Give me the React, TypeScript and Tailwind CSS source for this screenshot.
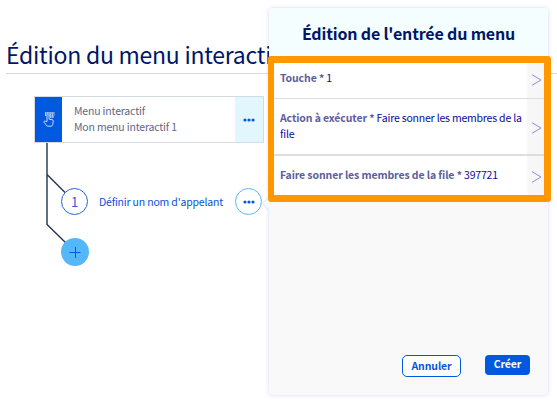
function Dots({ className }: { className: string }) {
  return (
    <svg className={className} width="12" height="4" viewBox="0 0 12 4" fill="currentColor">
      <circle cx="2" cy="2" r="1.6" />
      <circle cx="6" cy="2" r="1.6" />
      <circle cx="10" cy="2" r="1.6" />
    </svg>
  );
}

function KeypadHand() {
  return (
    <svg className="-mt-px" width="12" height="15" viewBox="0 0 12 15" fill="none" stroke="#dbe9ff" strokeWidth="0.9" strokeLinejoin="round">
      <path d="M2 1h9.5M2 3h1.6M6.4 3h5M7 5h4" strokeDasharray="1.6 .5" strokeWidth="1.5" />
      <path d="M4 9.5V3.4c0-1.2 2-1.2 2 0v3.8l3.2.5c.8.1 1.2.6 1.1 1.3l-.6 3.4-1 1.8H4.3L1 10.3c-.5-.9.6-1.6 1.3-1z" />
    </svg>
  );
}

type RowProps = { label: string; value: string; className: string; textTop: string; arrowTop: string };

function Row({ label, value, className, textTop, arrowTop }: RowProps) {
  return (
    <div className={`flex border-[#dedede] bg-white ${className}`}>
      <p className={`w-[253px] shrink-0 pl-[6px] text-[10.5px] leading-4 tracking-[-0.2px] text-[#0a0a9c] ${textTop}`}>
        <span className="font-bold tracking-[-0.11px] text-[#5b5e9d]">{label} *</span> {value}
      </p>
      <span className={`flex flex-1 justify-end bg-[#f7f7f7] pr-[2px] ${arrowTop}`}>
        <svg width="11" height="12" viewBox="0 0 11 12" fill="none" stroke="#8f8fd8" strokeWidth="1">
          <path d="M1 .7 10 6 1 11.3" />
        </svg>
      </span>
    </div>
  );
}

export default function App() {
  return (
    <div className="relative h-[407px] w-[557px] overflow-hidden bg-white font-['Noto_Sans_CJK_SC','Noto_Sans',sans-serif]">
      <h1 className="ml-[6px] h-[74px] whitespace-nowrap border-b border-[#d8d9dc] pt-[38px] text-[23px] leading-8 tracking-[-0.26px] text-[#001666]">
        Édition du menu interactif
      </h1>

      <div className="ml-[34px] mt-[22px] w-[230px]">
        <div className="flex h-[47px] border border-[#d3dce3]">
          <div className="flex w-[27px] items-center justify-center bg-[#0059de]">
            <KeypadHand />
          </div>
          <div className="flex-1 pl-[12px] pt-[6px] text-[10.5px] leading-4 tracking-[-0.18px] text-[#62678a]">
            <p>Menu interactif</p>
            <p>Mon menu interactif 1</p>
          </div>
          <div className="flex w-[28px] items-center justify-center bg-[#e2f6fd]">
            <Dots className="text-[#0059de]" />
          </div>
        </div>

        <div className="relative pl-[27px] pt-[45px]">
          <svg className="absolute left-0 top-0" width="60" height="110" viewBox="0 0 60 110" fill="none" stroke="#1f3550" strokeWidth="1.4">
            <path d="M13 0V81.5L33 101M13 31.5 31.5 50" />
          </svg>
          <div className="flex h-[27px] items-center">
            <span className="relative flex size-[27px] items-center justify-center rounded-full border border-[#2563dc] bg-white pb-px text-[13px] leading-none text-[#1f5bdc]">
              1
            </span>
            <span className="ml-[11px] flex-1 whitespace-nowrap text-[10.5px] leading-4 tracking-[-0.18px] text-[#0b50d8]">
              Définir un nom d'appelant
            </span>
            <span className="mr-[2px] flex size-[27px] items-center justify-center rounded-full border border-[#5bb9f3]">
              <Dots className="text-[#0059de]" />
            </span>
          </div>
          <span className="relative mt-[23px] flex size-[28px] items-center justify-center rounded-full bg-[#54b8f8]">
            <svg width="12" height="12" viewBox="0 0 12 12" stroke="#0059de" strokeWidth="1">
              <path d="M.5 6.5h11M6.5 1v11" />
            </svg>
          </span>
        </div>
      </div>

      <section className="absolute left-[269px] top-[8px] flex h-[387px] w-[279px] flex-col rounded-[4px] bg-[#f9f9f9] shadow-[0_0_4px_rgba(60,60,200,0.2)]">
        <span className="absolute -left-[4px] top-[191px] size-[9px] rotate-45 bg-[#fafafd] shadow-[-1px_1px_2px_rgba(60,60,200,0.12)]" />
        <h2 className="h-[55px] shrink-0 rounded-t-[4px] bg-[#f5feff] pt-[13px] text-center text-[16px] font-bold leading-6 tracking-[-0.18px] text-[#001666]">
          Édition de l'entrée du menu
        </h2>
        <div className="ml-[5px] w-[270px]">
          <Row className="h-[36px] border-b" textTop="pt-[7px]" arrowTop="pt-[11px]" label="Touche" value="1" />
          <Row className="h-[57px] border-b-2" textTop="pt-[11px]" arrowTop="pt-[23px]" label="Action à exécuter" value="Faire sonner les membres de la file" />
          <Row className="h-[39px]" textTop="pt-[11px]" arrowTop="pt-[15px]" label="Faire sonner les membres de la file" value="397721" />
        </div>
        <div className="absolute -left-px top-[48px] h-[146px] w-[283px] rounded-[3px] border-[7px] border-l-[6px] border-[#ff9800]" />
        <div className="mt-auto flex items-start justify-end pb-[18px] pr-[18px] text-[10.5px] font-bold tracking-[-0.12px]">
          <button className="mr-[24px] h-[22px] w-[59px] rounded-[5px] border border-[#0059de] bg-white pb-px leading-[19px] text-[#0b56da]">Annuler</button>
          <button className="h-[20px] w-[45px] rounded-[4px] bg-[#0059de] pb-[2px] leading-[18px] text-white">Créer</button>
        </div>
      </section>
    </div>
  );
}
